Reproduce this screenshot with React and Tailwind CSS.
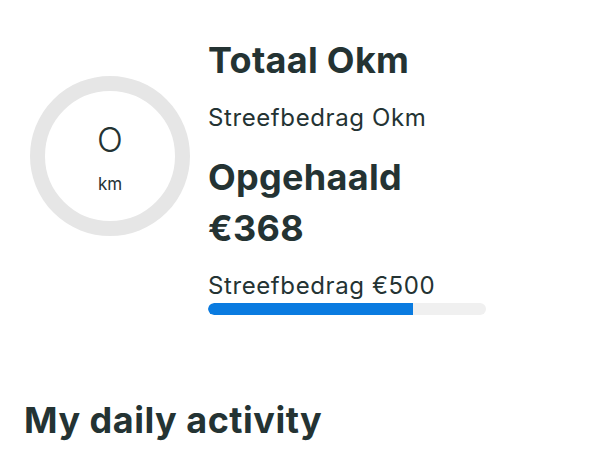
import React from 'react';

const font = { fontFamily: 'Inter, "Noto Sans", sans-serif' };

const Stats = ({ km, goalKm, raised, goal }) => {
  const pct = Math.min(100, (raised / goal) * 100);
  return (
    <div className="flex items-start">
      <div className="ml-[30px] mt-[76px] w-[160px] h-[160px] rounded-full border-[15px] border-[#e6e6e6] flex flex-col items-center pt-[32px] shrink-0 text-[#243333]">
        <span className="text-[34px] font-light leading-[34px]">{km}</span>
        <span className="text-[17px] leading-[17px] mt-[19px]">km</span>
      </div>
      <div className="ml-[18px] mt-[40px] w-[278px] text-[#243333]">
        <h2 className="text-[36px] font-bold leading-[40px] tracking-[0.3px]">Totaal {goalKm}km</h2>
        <p className="text-[24px] leading-[30px] mt-[23px] tracking-[0.6px]">Streefbedrag {goalKm}km</p>
        <h2 className="text-[36px] font-bold leading-[40px] mt-[24px] tracking-[0.3px]">Opgehaald</h2>
        <h2 className="text-[36px] font-bold leading-[40px] mt-[11px] tracking-[0.3px]">€{raised}</h2>
        <p className="text-[24px] leading-[30px] mt-[23px] tracking-[0.6px]">Streefbedrag €{goal}</p>
        <div className="h-[12px] w-full rounded-full bg-[#f0f0f0] mt-[2px] overflow-hidden">
          <div className="h-full bg-[#0a7be0] rounded-l-full" style={{ width: `${pct}%` }} />
        </div>
      </div>
    </div>
  );
};

export default function App() {
  return (
    <div className="w-[600px] h-[450px] bg-white overflow-hidden" style={font}>
      <Stats km="O" goalKm="O" raised={368} goal={500} />
      <h1 className="ml-[24px] mt-[85px] text-[36px] font-bold leading-[40px] tracking-[0.5px] text-[#243333]">My daily activity</h1>
    </div>
  );
}
